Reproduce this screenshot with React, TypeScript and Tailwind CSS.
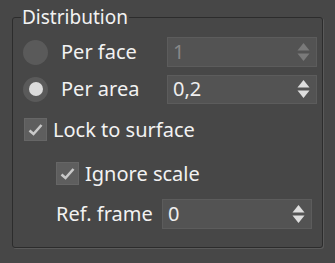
import React from "react";

const font = { fontFamily: '"Noto Sans", "Open Sans", sans-serif' };

function Radio({ checked }: { checked?: boolean }) {
  return (
    <span className="flex size-[25px] shrink-0 items-center justify-center rounded-full bg-[#5a5a5a]">
      {checked && <span className="size-[14px] rounded-full bg-[#dcdcdc]" />}
    </span>
  );
}

function Check({ checked }: { checked?: boolean }) {
  return (
    <span className="flex size-[23px] shrink-0 items-center justify-center border border-[#666666] bg-[#5e5e5e]">
      {checked && (
        <svg width="15" height="13" viewBox="0 0 15 13">
          <path d="M1.5 7.5 L5.5 11 L13.5 2" fill="none" stroke="#c9c9c9" strokeWidth="2.6" />
        </svg>
      )}
    </span>
  );
}

function Spinner({ value, disabled, h = 30 }: { value: string; disabled?: boolean; h?: number }) {
  const arrow = disabled ? "#7a7a7a" : "#dedede";
  return (
    <div
      className="flex w-[150px] items-center justify-between border border-[#5c5c5c] bg-[#535353] pl-[5px] pr-[6px]"
      style={{ height: h }}
    >
      <span className={disabled ? "text-[20px] text-[#888888]" : "text-[20px] text-[#eeeeee]"}>{value}</span>
      <svg width="13" height="20" viewBox="0 0 13 20">
        <path d="M6.5 1 L12.5 8.5 L0.5 8.5 Z" fill={arrow} />
        <path d="M0.5 11.5 L12.5 11.5 L6.5 19 Z" fill={arrow} />
      </svg>
    </div>
  );
}

export default function App() {
  return (
    <div className="h-[263px] w-[335px] bg-[#474747] pl-[12px] pt-[7px] text-[#f2f2f2]" style={font}>
      <fieldset className="h-[241px] w-[311px] rounded-[3px] border border-[#2c2c2c] pl-[10px] pr-[5px] shadow-[1px_1px_0_#5a5a5a]">
        <legend className="ml-[-2px] px-[1px] text-[19px] leading-[20px]">Distribution</legend>

        <div className="mt-[10px] flex h-[30px] items-center">
          <Radio />
          <span className="ml-[13px] w-[106px] text-[20px]">Per face</span>
          <Spinner value="1" disabled />
        </div>

        <div className="mt-[7px] flex h-[30px] items-center">
          <Radio checked />
          <span className="ml-[13px] w-[106px] text-[20px]">Per area</span>
          <Spinner value="0,2" h={29} />
        </div>

        <div className="ml-[1px] mt-[14px] flex h-[23px] items-center">
          <Check checked />
          <span className="ml-[6px] text-[20px]">Lock to surface</span>
        </div>

        <div className="ml-[33px] mt-[21px] flex h-[23px] items-center">
          <Check checked />
          <span className="ml-[6px] text-[20px]">Ignore scale</span>
        </div>

        <div className="ml-[33px] mt-[14px] flex h-[30px] items-center">
          <span className="w-[106px] text-[20px]">Ref. frame</span>
          <Spinner value="0" />
        </div>
      </fieldset>
    </div>
  );
}
